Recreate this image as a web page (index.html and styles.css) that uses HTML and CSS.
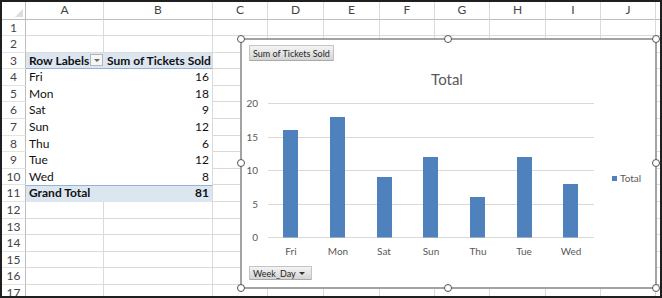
FILE: index.html
```html
<!DOCTYPE html>
<html>
<head>
  <title>Tickets Pivot</title>
  <link rel="stylesheet" href="styles.css">
</head>
<body>
  <div class="sheet">
    <!-- Column headers -->
    <div class="row head-row">
      <div class="corner"><span class="corner-mark"></span></div>
      <div class="col-head">A</div>
      <div class="col-head">B</div>
      <div class="col-head">C</div>
      <div class="col-head">D</div>
      <div class="col-head">E</div>
      <div class="col-head">F</div>
      <div class="col-head">G</div>
      <div class="col-head">H</div>
      <div class="col-head">I</div>
      <div class="col-head">J</div>
      <div class="col-head"></div>
    </div>

    <div class="row">
      <div class="row-num">1</div>
      <div></div><div></div><div></div><div></div><div></div><div></div><div></div><div></div><div></div><div></div><div></div>
    </div>
    <div class="row">
      <div class="row-num">2</div>
      <div></div><div></div><div></div><div></div><div></div><div></div><div></div><div></div><div></div><div></div><div></div>
    </div>

    <!-- Pivot table -->
    <div class="row">
      <div class="row-num">3</div>
      <div class="pv-head pv-a">
        <span>Row Labels</span>
        <button class="filter-btn"></button>
      </div>
      <div class="pv-head">Sum of Tickets Sold</div>
      <div></div><div></div><div></div><div></div><div></div><div></div><div></div><div></div><div></div>
    </div>
    <div class="row">
      <div class="row-num">4</div>
      <div class="pv pv-a">Fri</div>
      <div class="pv num">16</div>
      <div></div><div></div><div></div><div></div><div></div><div></div><div></div><div></div><div></div>
    </div>
    <div class="row">
      <div class="row-num">5</div>
      <div class="pv pv-a">Mon</div>
      <div class="pv num">18</div>
      <div></div><div></div><div></div><div></div><div></div><div></div><div></div><div></div><div></div>
    </div>
    <div class="row">
      <div class="row-num">6</div>
      <div class="pv pv-a">Sat</div>
      <div class="pv num">9</div>
      <div></div><div></div><div></div><div></div><div></div><div></div><div></div><div></div><div></div>
    </div>
    <div class="row">
      <div class="row-num">7</div>
      <div class="pv pv-a">Sun</div>
      <div class="pv num">12</div>
      <div></div><div></div><div></div><div></div><div></div><div></div><div></div><div></div><div></div>
    </div>
    <div class="row">
      <div class="row-num">8</div>
      <div class="pv pv-a">Thu</div>
      <div class="pv num">6</div>
      <div></div><div></div><div></div><div></div><div></div><div></div><div></div><div></div><div></div>
    </div>
    <div class="row">
      <div class="row-num">9</div>
      <div class="pv pv-a">Tue</div>
      <div class="pv num">12</div>
      <div></div><div></div><div></div><div></div><div></div><div></div><div></div><div></div><div></div>
    </div>
    <div class="row">
      <div class="row-num">10</div>
      <div class="pv pv-a">Wed</div>
      <div class="pv num">8</div>
      <div></div><div></div><div></div><div></div><div></div><div></div><div></div><div></div><div></div>
    </div>
    <div class="row">
      <div class="row-num">11</div>
      <div class="pv-total pv-a">Grand Total</div>
      <div class="pv-total num">81</div>
      <div></div><div></div><div></div><div></div><div></div><div></div><div></div><div></div><div></div>
    </div>

    <div class="row">
      <div class="row-num">12</div>
      <div></div><div></div><div></div><div></div><div></div><div></div><div></div><div></div><div></div><div></div><div></div>
    </div>
    <div class="row">
      <div class="row-num">13</div>
      <div></div><div></div><div></div><div></div><div></div><div></div><div></div><div></div><div></div><div></div><div></div>
    </div>
    <div class="row">
      <div class="row-num">14</div>
      <div></div><div></div><div></div><div></div><div></div><div></div><div></div><div></div><div></div><div></div><div></div>
    </div>
    <div class="row">
      <div class="row-num">15</div>
      <div></div><div></div><div></div><div></div><div></div><div></div><div></div><div></div><div></div><div></div><div></div>
    </div>
    <div class="row">
      <div class="row-num">16</div>
      <div></div><div></div><div></div><div></div><div></div><div></div><div></div><div></div><div></div><div></div><div></div>
    </div>
    <div class="row">
      <div class="row-num">17</div>
      <div></div><div></div><div></div><div></div><div></div><div></div><div></div><div></div><div></div><div></div><div></div>
    </div>

    <!-- Pivot chart (floating object) -->
    <div class="chart">
      <button class="field-btn">Sum of Tickets Sold</button>

      <svg class="plot" width="413" height="204" viewBox="0 21 413 204">
        <text class="title" x="205" y="44.5" text-anchor="middle">Total</text>

        <g class="gridlines">
          <line x1="26" x2="352" y1="63.5" y2="63.5"/>
          <line x1="26" x2="352" y1="97.5" y2="97.5"/>
          <line x1="26" x2="352" y1="130.5" y2="130.5"/>
          <line x1="26" x2="352" y1="164.5" y2="164.5"/>
          <line x1="26" x2="352" y1="197.5" y2="197.5"/>
        </g>

        <g class="axis-label" text-anchor="end">
          <text x="16" y="67">20</text>
          <text x="16" y="101">15</text>
          <text x="16" y="134">10</text>
          <text x="16" y="168">5</text>
          <text x="16" y="201">0</text>
        </g>

        <g class="bars">
          <rect x="41" y="90" width="15" height="107.5"/>
          <rect x="88" y="77" width="15" height="120.5"/>
          <rect x="135" y="137" width="15" height="60.5"/>
          <rect x="181" y="117" width="15" height="80.5"/>
          <rect x="228" y="157" width="15" height="40.5"/>
          <rect x="275" y="117" width="15" height="80.5"/>
          <rect x="321" y="144" width="15" height="53.5"/>
        </g>

        <g class="axis-label" text-anchor="middle">
          <text x="49" y="214.5">Fri</text>
          <text x="96" y="214.5">Mon</text>
          <text x="142" y="214.5">Sat</text>
          <text x="189" y="214.5">Sun</text>
          <text x="236" y="214.5">Thu</text>
          <text x="282" y="214.5">Tue</text>
          <text x="329" y="214.5">Wed</text>
        </g>

        <rect class="legend-key" x="370" y="136" width="5" height="5"/>
        <text class="axis-label" x="378" y="141.5">Total</text>
      </svg>

      <button class="field-btn drop">Week_Day <span class="caret"></span></button>

      <span class="handle h-tl"></span>
      <span class="handle h-tc"></span>
      <span class="handle h-tr"></span>
      <span class="handle h-ml"></span>
      <span class="handle h-mr"></span>
      <span class="handle h-bl"></span>
      <span class="handle h-bc"></span>
      <span class="handle h-br"></span>
    </div>
  </div>
</body>
</html>
```

FILE: styles.css
```css
body {
  margin: 0;
  background: #fff;
  font-family: Lato, "Open Sans", sans-serif;
}

.sheet {
  position: relative;
  width: 662px;
  height: 298px;
  box-sizing: border-box;
  border: 2px solid #1f1f1f;
  overflow: hidden;
}

/* Grid rows */
.row {
  display: grid;
  grid-template-columns: 24px 78px 109px 55px 56px 56px 55px 55px 56px 55px 55px 1fr;
  height: 16.6px;
}

.head-row {
  height: 17.5px;
}

.row > div {
  min-width: 0;
  box-sizing: border-box;
  border-right: 1px solid #dadada;
  border-bottom: 1px solid #dadada;
  padding: 0 3px;
  font-size: 12px;
  line-height: 15.6px;
  color: #111;
  white-space: nowrap;
  overflow: hidden;
}

.corner {
  position: relative;
  border-right-color: #bdbdbd !important;
  border-bottom-color: #bdbdbd !important;
}

.corner-mark {
  position: absolute;
  right: 2px;
  bottom: 2px;
  width: 0;
  height: 0;
  border-left: 8px solid transparent;
  border-bottom: 8px solid #dcdcdc;
}

.col-head {
  text-align: center;
  color: #444 !important;
  border-bottom-color: #bdbdbd !important;
  line-height: 16.5px !important;
}

.row-num {
  text-align: center;
  color: #444 !important;
  padding: 0 !important;
  border-right-color: #bdbdbd !important;
  border-bottom-color: #e3e3e3 !important;
}

/* Pivot table */
.row > .pv-head {
  background: #dce6f1;
  font-weight: bold;
  border-bottom-color: #95b3d7;
}

.row > .pv {
  background: #fff;
  border-bottom: none;
}

.row > .pv-total {
  background: #dce6f1;
  font-weight: bold;
  border-top: 1px solid #95b3d7;
  border-bottom: none;
  line-height: 14.6px;
}

.row > .pv-a {
  border-right: none;
}

.pv-head.pv-a {
  display: flex;
  align-items: center;
  justify-content: space-between;
  padding-right: 1px;
}

.num {
  text-align: right;
}

.filter-btn {
  width: 13px;
  height: 12px;
  padding: 0;
  border: 1px solid #b5b5b5;
  background: #f6f6f6;
  position: relative;
}

.filter-btn::after {
  content: '';
  position: absolute;
  left: 3px;
  top: 4px;
  border-left: 3px solid transparent;
  border-right: 3px solid transparent;
  border-top: 3px solid #666;
}

/* Chart */
.chart {
  position: absolute;
  left: 238px;
  top: 36px;
  width: 417px;
  height: 251px;
  box-sizing: border-box;
  border: 2px solid #a3a3a3;
  background: #fff;
  display: flex;
  flex-direction: column;
  align-items: flex-start;
}

.field-btn {
  margin: 5px 0 0 7px;
  height: 16px;
  padding: 0 3px;
  font-family: Lato, "Open Sans", sans-serif;
  font-size: 9px;
  color: #262626;
  background: linear-gradient(#f4f4f4, #d4d4d4);
  border: 1px solid #c4c4c4;
  border-bottom-color: #a9a9a9;
  border-radius: 1px;
}

.field-btn.drop {
  margin-top: 1px;
  height: 14px;
  width: 63px;
  display: flex;
  align-items: center;
  justify-content: space-between;
  padding: 0 6px 0 3px;
}

.caret {
  border-left: 3px solid transparent;
  border-right: 3px solid transparent;
  border-top: 3px solid #333;
}

.plot {
  display: block;
  font-family: Lato, "Open Sans", sans-serif;
}

.plot .title {
  font-size: 15px;
  fill: #595959;
}

.gridlines line {
  stroke: #d9d9d9;
  stroke-width: 1;
}

.axis-label {
  font-size: 10px;
  fill: #595959;
}

.bars rect,
.legend-key {
  fill: #4f81bd;
}

/* Selection handles */
.handle {
  position: absolute;
  width: 6px;
  height: 6px;
  border: 1.5px solid #555;
  border-radius: 50%;
  background: #fff;
  transform: translate(-50%, -50%);
}

.h-tl { left: -1px; top: -1px; }
.h-tc { left: 206px; top: -1px; }
.h-tr { left: 414px; top: -1px; }
.h-ml { left: -1px; top: 123px; }
.h-mr { left: 414px; top: 123px; }
.h-bl { left: -1px; top: 248px; }
.h-bc { left: 206px; top: 248px; }
.h-br { left: 414px; top: 248px; }
```
